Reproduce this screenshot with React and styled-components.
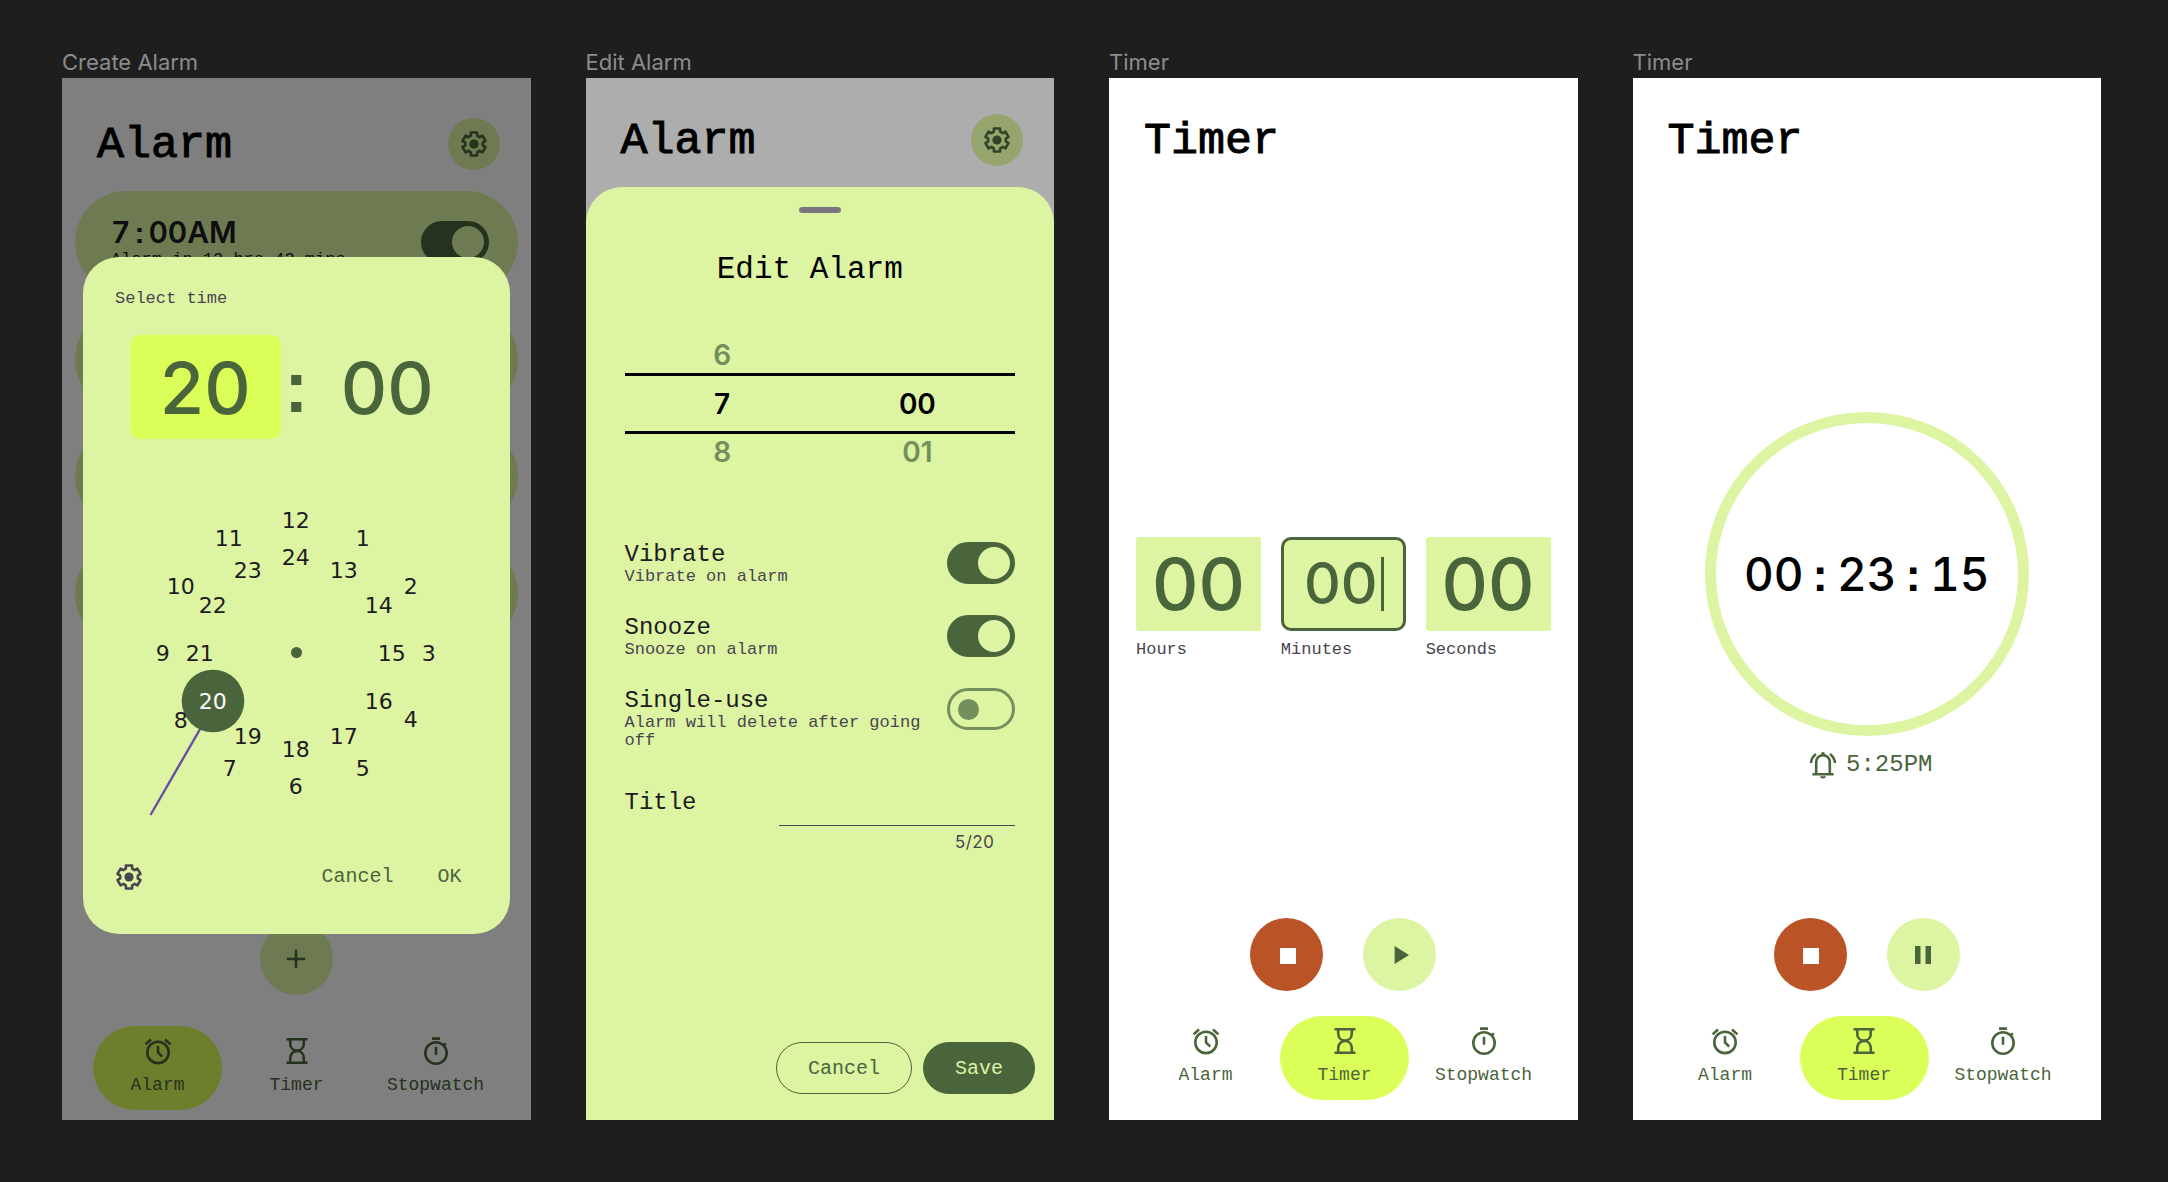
import React from 'react';
import styled, { createGlobalStyle, css } from 'styled-components';

const color = {
  canvas: '#1e1e1e',
  label: '#8c8c8c',
  surface: '#ffffff',
  lime: '#ddf4a3',
  bright: '#dbff58',
  green: '#4a643b',
  faded: '#748f5c',
  ink: '#1d1b20',
  muted: '#49454f',
  handle: '#79747e',
  hand: '#6750a4',
  stop: '#ba5325',
};

const mono = "'Liberation Mono', monospace";
const digits = "Inter, 'Liberation Sans', sans-serif";
const dialDigits = "'DejaVu Sans', sans-serif";
const squareDots = "'Liberation Sans', sans-serif";

const GlobalStyle = createGlobalStyle`
  *, *::before, *::after { box-sizing: border-box; }
  body { margin: 0; background: ${color.canvas}; font-family: ${mono}; }
  button, input { font: inherit; color: inherit; margin: 0; padding: 0; border: 0; background: none; }
  button { cursor: pointer; }
  h1, h2, h3, p, ul { margin: 0; padding: 0; font-weight: normal; list-style: none; }
`;

/* ---------- Canvas ---------- */

const Canvas = styled.main`
  min-height: 100vh;
  padding: 48px 67px 62px 62px;
  display: grid;
  grid-template-columns: repeat(auto-fit, minmax(420px, 1fr));
  gap: 55px;
`;

const Artboard = styled.section`
  display: flex;
  flex-direction: column;
`;

const ArtboardLabel = styled.h2`
  height: 30px;
  font-family: ${digits};
  font-size: 22px;
  line-height: 28px;
  color: ${color.label};
`;

const Screen = styled.div`
  position: relative;
  flex: 1;
  display: flex;
  flex-direction: column;
  overflow: hidden;
  background: ${color.surface};
`;

const Header = styled.header`
  display: flex;
  align-items: center;
  justify-content: space-between;
  height: 52px;
  margin: ${(p) => p.$top}px 31px 0 35px;
`;

const ScreenTitle = styled.h1`
  padding-top: 4px;
  font-size: 45px;
  line-height: 52px;
  color: #000;
  -webkit-text-stroke: 1px #000;
`;

const RoundButton = styled.button`
  && {
    width: ${(p) => p.$size}px;
    height: ${(p) => p.$size}px;
    border-radius: 50%;
    display: grid;
    place-items: center;
    flex: none;
    background: ${(p) => (p.$danger ? color.stop : color.lime)};
    color: ${(p) => (p.$danger ? '#fff' : color.green)};
  }
`;

const Body = styled.div`
  flex: 1;
  display: flex;
  flex-direction: column;
  justify-content: center;
  padding: ${(p) => p.$top}px 27px 0;
`;

const Controls = styled.div`
  display: flex;
  justify-content: center;
  gap: 40px;
  margin-top: auto;
`;

const Nav = styled.nav`
  display: grid;
  grid-template-columns: repeat(3, minmax(0, 129px));
  gap: 10px;
  padding-left: ${(p) => p.$inset}px;
  margin: ${(p) => (p.$low ? '31px 0 10px' : '25px 0 20px')};
`;

const NavItem = styled.a`
  display: flex;
  flex-direction: column;
  align-items: center;
  gap: 10px;
  padding: 11px 0 15px;
  border-radius: 42px;
  font-size: 18px;
  line-height: 20px;
  text-decoration: none;
  color: ${color.green};
  background: ${(p) => (p.$active ? color.bright : 'transparent')};
`;

const Scrim = styled.div`
  position: absolute;
  inset: 0;
  background: rgba(0, 0, 0, ${(p) => p.$strength});
`;

/* ---------- Icons ---------- */

const Svg = ({ children }) => (
  <svg width="28" height="28" viewBox="0 0 28 28" fill="none" stroke="currentColor" strokeWidth="2.6" aria-hidden="true">
    {children}
  </svg>
);

const polar = (r, deg) => {
  const a = ((deg - 90) * Math.PI) / 180;
  return `${(14 + r * Math.cos(a)).toFixed(2)} ${(14 + r * Math.sin(a)).toFixed(2)}`;
};

const gearPath =
  [0, 60, 120, 180, 240, 300]
    .map((t, i) => `${i ? 'L' : 'M'}${polar(8.9, t - 21)}L${polar(11.9, t - 15)}L${polar(11.9, t + 15)}L${polar(8.9, t + 21)}`)
    .join('') + 'Z';

const GearIcon = () => (
  <Svg>
    <path d={gearPath} strokeLinejoin="round" />
    <circle cx="14" cy="14" r="4.6" fill="currentColor" stroke="none" />
  </Svg>
);

const AlarmIcon = () => (
  <Svg>
    <circle cx="14" cy="15.4" r="10.7" />
    <path d="M1.6 7.4L7 2.5M26.4 7.4L21 2.5" />
    <path d="M14 9v6.4l4.2 4.2" />
  </Svg>
);

const HourglassIcon = () => (
  <Svg>
    <path d="M3.5 2.2h21M3.5 25.8h21" />
    <path d="M7.2 2.2v4.2c0 4 2.6 7.2 6.8 7.2s6.8-3.2 6.8-7.2V2.2M7.2 25.8v-4.6c0-4 2.6-7.2 6.8-7.2s6.8 3.2 6.8 7.2v4.6" />
  </Svg>
);

const StopwatchIcon = () => (
  <Svg>
    <circle cx="14" cy="16" r="10.7" />
    <path d="M10 1.6h8M14 9.8v8M21.5 8.3l2.4-1.8" />
  </Svg>
);

const BellIcon = () => (
  <Svg>
    <path d="M7.2 22.5V11a6.8 6.8 0 0 1 13.6 0v11.5M3.4 23.2h21.2" />
    <path d="M2 12c.2-3.600 1.600-6.400 5-9M26 12c-.2-3.600-1.600-6.400-5-9" />
    <path d="M11.200 25.300h5.600a2.800 2.200 0 0 1-5.600 0z" fill="currentColor" stroke="none" />
    <circle cx="14" cy="3" r="1.900" fill="currentColor" stroke="none" />
  </Svg>
);

const PlusIcon = () => (
  <Svg>
    <path d="M14 4.7v18.6M4.7 14h18.6" />
  </Svg>
);

const StopIcon = () => (
  <Svg>
    <path d="M7 7h16v16H7z" fill="currentColor" stroke="none" />
  </Svg>
);

const PlayIcon = () => (
  <Svg>
    <path d="M8.6 5v18L23 14z" fill="currentColor" stroke="none" />
  </Svg>
);

const PauseIcon = () => (
  <Svg>
    <path d="M6 5h5.5v18H6zM16.500 5H22v18h-5.500z" fill="currentColor" stroke="none" />
  </Svg>
);

/* ---------- Shared parts ---------- */

const BottomNav = ({ active, inset, low }) => (
  <Nav $inset={inset} $low={low} aria-label="Main">
    {[
      ['Alarm', AlarmIcon],
      ['Timer', HourglassIcon],
      ['Stopwatch', StopwatchIcon],
    ].map(([name, Icon]) => (
      <NavItem key={name} href={`#${name.toLowerCase()}`} $active={name === active}>
        <Icon />
        {name}
      </NavItem>
    ))}
  </Nav>
);

const Separator = styled.span`
  padding: 0 ${(p) => p.$gap}px;
  font-family: ${squareDots};
  font-weight: 700;
`;

const Switch = styled.input.attrs({ type: 'checkbox', role: 'switch' })`
  && {
    appearance: none;
    flex: none;
    width: 68px;
    height: 42px;
    border-radius: 21px;
    display: flex;
    align-items: center;
    padding: 0 8px;
    border: 3px solid ${color.faded};
    cursor: pointer;
  }
  &::before {
    content: '';
    width: 21px;
    height: 21px;
    border-radius: 50%;
    background: ${color.faded};
  }
  &&:checked {
    justify-content: flex-end;
    padding: 0 2px;
    border-color: ${color.green};
    background: ${color.green};
  }
  &:checked::before {
    width: 32px;
    height: 32px;
    background: ${color.lime};
  }
`;

/* ---------- Create alarm ---------- */

const AlarmList = styled.ul`
  display: flex;
  flex-direction: column;
  gap: 14px;
  margin: 21px 13px 0;
`;

const AlarmCard = styled.li`
  display: flex;
  justify-content: space-between;
  height: 103px;
  padding: 23px 29px 0 36px;
  border-radius: 52px;
  background: ${color.lime};
`;

const AlarmTime = styled.label`
  display: block;
  font-family: ${digits};
  font-size: 30px;
  font-weight: 600;
  line-height: 36px;
  font-variant-numeric: tabular-nums;
  color: ${color.ink};
`;

const AlarmNote = styled.p`
  font-size: 17px;
  line-height: 18px;
  color: ${color.ink};
`;

const SwitchSlot = styled.div`
  padding-top: 7px;
`;

const Overlay = styled.div`
  position: absolute;
  inset: 0;
  padding: 179px 21px 0;
`;

const Dialog = styled.section`
  display: flex;
  flex-direction: column;
  padding: 30px 32px 33px;
  border-radius: 36px;
  background: ${color.lime};
`;

const DialogTitle = styled.h3`
  font-size: 17px;
  line-height: 24px;
  color: ${color.muted};
`;

const TimeRow = styled.div`
  display: flex;
  justify-content: center;
  align-items: center;
  margin-top: 24px;
  font-family: ${digits};
  font-size: 72px;
  font-weight: 500;
  color: ${color.green};
`;

const TimePart = styled.button`
  && {
    width: 151px;
    height: 104px;
    border-radius: 10px;
    background: ${(p) => (p.$active ? color.bright : 'transparent')};
  }
`;

const Colon = styled.span`
  width: 31px;
  text-align: center;
  font-family: ${squareDots};
  font-weight: 700;
`;

const Dial = styled.div`
  position: relative;
  align-self: center;
  width: 333px;
  height: 333px;
  margin-top: 47px;
`;

const DialDrawing = styled.svg`
  display: block;
`;

const DialNumber = styled.button`
  && {
    position: absolute;
    width: 32px;
    height: 32px;
    font-family: ${dialDigits};
    font-size: 22px;
    line-height: 32px;
    color: ${(p) => (p.$selected ? '#fff' : color.ink)};
  }
`;

const DialogFooter = styled.footer`
  display: flex;
  align-items: center;
  height: 48px;
  margin-top: 34px;
  color: ${color.green};
`;

const IconButton = styled.button`
  && {
    display: grid;
    margin-right: auto;
    color: ${color.muted};
  }
`;

const TextButton = styled.button`
  && {
    margin-left: 12px;
    padding: 0 16px;
    font-size: 20px;
    line-height: 50px;
  }
`;

const CENTER = 166;
const onDial = (radius, hour) => {
  const a = (hour * Math.PI) / 6;
  return { x: Math.round(CENTER + radius * Math.sin(a)), y: Math.round(CENTER - radius * Math.cos(a)) };
};
const hours = [
  ...Array.from({ length: 12 }, (_, i) => ({ value: i + 1, ...onDial(133, i + 1) })),
  ...Array.from({ length: 12 }, (_, i) => ({ value: i + 13, ...onDial(96, i + 1) })),
];

const ClockDial = ({ selected }) => {
  const at = hours.find((h) => h.value === selected);
  return (
    <Dial>
      <DialDrawing width="333" height="333" viewBox="0 0 333 333" aria-hidden="true">
        <path d="M20.500 329L84 219" stroke={color.hand} strokeWidth="2.400" />
        <circle cx="166.500" cy="166.500" r="5.500" fill={color.green} />
        <circle cx={at.x} cy={at.y + 1} r="31.300" fill={color.green} />
      </DialDrawing>
      {hours.map((h) => (
        <DialNumber key={h.value} $selected={h.value === selected} style={{ left: h.x - 16, top: h.y - 14 }}>
          {h.value}
        </DialNumber>
      ))}
    </Dial>
  );
};

const CreateAlarm = () => (
  <Artboard>
    <ArtboardLabel>Create Alarm</ArtboardLabel>
    <Screen>
      <Header $top={40}>
        <ScreenTitle>Alarm</ScreenTitle>
        <RoundButton $size={52} aria-label="Settings">
          <GearIcon />
        </RoundButton>
      </Header>
      <AlarmList>
        <AlarmCard>
          <div>
            <AlarmTime htmlFor="alarm-7">
              7<Separator $gap={4}>:</Separator>00AM
            </AlarmTime>
            <AlarmNote>Alarm in 12 hrs 42 mins</AlarmNote>
          </div>
          <SwitchSlot>
            <Switch id="alarm-7" defaultChecked />
          </SwitchSlot>
        </AlarmCard>
        <AlarmCard />
        <AlarmCard />
        <AlarmCard />
      </AlarmList>
      <Controls>
        <RoundButton $size={73} aria-label="Add alarm">
          <PlusIcon />
        </RoundButton>
      </Controls>
      <BottomNav active="Alarm" inset={31} low />
      <Scrim $strength={0.5} />
      <Overlay>
        <Dialog role="dialog" aria-label="Select time">
          <DialogTitle>Select time</DialogTitle>
          <TimeRow>
            <TimePart $active>20</TimePart>
            <Colon>:</Colon>
            <TimePart>00</TimePart>
          </TimeRow>
          <ClockDial selected={20} />
          <DialogFooter>
            <IconButton aria-label="Settings">
              <GearIcon />
            </IconButton>
            <TextButton>Cancel</TextButton>
            <TextButton>OK</TextButton>
          </DialogFooter>
        </Dialog>
      </Overlay>
    </Screen>
  </Artboard>
);

/* ---------- Edit alarm ---------- */

const SheetLayer = styled.div`
  position: absolute;
  inset: 0;
  display: flex;
  padding-top: 109px;
`;

const Sheet = styled.form`
  flex: 1;
  display: flex;
  flex-direction: column;
  padding: 20px 39px 26px;
  border-radius: 36px 36px 0 0;
  background: ${color.lime};
`;

const Handle = styled.div`
  align-self: center;
  width: 42px;
  height: 6px;
  border-radius: 3px;
  background: ${color.handle};
`;

const SheetTitle = styled.h3`
  margin-top: 39px;
  padding-right: 20px;
  text-align: center;
  font-size: 31px;
  line-height: 36px;
  color: #000;
`;

const Picker = styled.div`
  margin-top: 49px;
  font-family: ${digits};
  font-size: 28px;
  font-weight: 600;
`;

const PickerRow = styled.div`
  display: grid;
  grid-template-columns: 1fr 1fr;
  align-items: center;
  height: 36px;
  color: ${color.faded};
  ${(p) =>
    p.$current &&
    css`
      height: 61px;
      border: solid #000;
      border-width: 3px 0;
      color: #000;
    `}
`;

const Settings = styled.div`
  display: flex;
  flex-direction: column;
  gap: 29px;
  margin-top: 72px;
`;

const SettingRow = styled.div`
  display: flex;
  justify-content: space-between;
  align-items: flex-start;
  gap: 12px;
`;

const SettingName = styled.label`
  display: block;
  font-size: 24px;
  line-height: 26px;
  color: ${color.ink};
`;

const SettingNote = styled.p`
  font-size: 17px;
  line-height: 18px;
  color: ${color.muted};
`;

const TitleField = styled.div`
  display: grid;
  grid-template-columns: 1fr 236px;
  margin-top: 40px;
`;

const TitleInput = styled.input`
  && {
    width: 100%;
    height: 36px;
    border-bottom: 1px solid ${color.muted};
    font-size: 20px;
    outline: none;
  }
`;

const Counter = styled.p`
  grid-column: 2;
  padding: 6px 21px 0 0;
  text-align: right;
  font-family: ${digits};
  font-size: 17px;
  line-height: 20px;
  font-variant-numeric: tabular-nums;
  color: ${color.muted};
`;

const SheetActions = styled.footer`
  display: flex;
  justify-content: flex-end;
  gap: 11px;
  margin: auto -20px 0 0;
`;

const PillButton = styled.button`
  && {
    height: 52px;
    padding: 0 31px;
    border: 1px solid ${color.green};
    border-radius: 26px;
    font-size: 20px;
    background: ${(p) => (p.$filled ? color.green : 'transparent')};
    color: ${(p) => (p.$filled ? color.lime : color.green)};
  }
`;

const EditAlarm = () => (
  <Artboard>
    <ArtboardLabel>Edit Alarm</ArtboardLabel>
    <Screen>
      <Header $top={36}>
        <ScreenTitle>Alarm</ScreenTitle>
        <RoundButton $size={52} aria-label="Settings">
          <GearIcon />
        </RoundButton>
      </Header>
      <Scrim $strength={0.32} />
      <SheetLayer>
        <Sheet onSubmit={(e) => e.preventDefault()}>
          <Handle />
          <SheetTitle>Edit Alarm</SheetTitle>
          <Picker>
            <PickerRow>
              <button type="button">6</button>
            </PickerRow>
            <PickerRow $current>
              <button type="button">7</button>
              <button type="button">00</button>
            </PickerRow>
            <PickerRow>
              <button type="button">8</button>
              <button type="button">01</button>
            </PickerRow>
          </Picker>
          <Settings>
            {[
              ['vibrate', 'Vibrate', 'Vibrate on alarm', true],
              ['snooze', 'Snooze', 'Snooze on alarm', true],
              ['single', 'Single-use', 'Alarm will delete after going off', false],
            ].map(([id, name, note, on]) => (
              <SettingRow key={id}>
                <div>
                  <SettingName htmlFor={id}>{name}</SettingName>
                  <SettingNote>{note}</SettingNote>
                </div>
                <Switch id={id} defaultChecked={on} />
              </SettingRow>
            ))}
          </Settings>
          <TitleField>
            <SettingName htmlFor="title">Title</SettingName>
            <TitleInput id="title" type="text" />
            <Counter>5/20</Counter>
          </TitleField>
          <SheetActions>
            <PillButton type="button">Cancel</PillButton>
            <PillButton type="submit" $filled>
              Save
            </PillButton>
          </SheetActions>
        </Sheet>
      </SheetLayer>
    </Screen>
  </Artboard>
);

/* ---------- Timer setup ---------- */

const Fields = styled.div`
  display: grid;
  grid-template-columns: repeat(3, minmax(0, 1fr));
  gap: 20px;
`;

const FieldBox = styled.div`
  display: flex;
  align-items: center;
  justify-content: center;
  gap: 2px;
  height: 94px;
  border-radius: ${(p) => (p.$focused ? 10 : 3)}px;
  border: ${(p) => (p.$focused ? `3px solid ${color.green}` : '0')};
  background: ${color.lime};
`;

const FieldInput = styled.input`
  && {
    width: ${(p) => (p.$focused ? 76 : 100)}px;
    height: 88px;
    text-align: center;
    font-family: ${digits};
    font-size: ${(p) => (p.$focused ? 57 : 72)}px;
    font-weight: 500;
    color: ${color.green};
    outline: none;
  }
`;

const Caret = styled.span`
  width: 3px;
  height: 54px;
  background: ${color.green};
`;

const FieldLabel = styled.label`
  display: block;
  margin-top: 9px;
  font-size: 17px;
  line-height: 20px;
  color: ${color.muted};
`;

const TimerSetup = () => (
  <Artboard>
    <ArtboardLabel>Timer</ArtboardLabel>
    <Screen>
      <Header $top={36}>
        <ScreenTitle>Timer</ScreenTitle>
      </Header>
      <Body $top={112}>
        <Fields>
          {['Hours', 'Minutes', 'Seconds'].map((name) => {
            const focused = name === 'Minutes';
            return (
              <div key={name}>
                <FieldBox $focused={focused}>
                  <FieldInput id={name} $focused={focused} defaultValue="00" inputMode="numeric" />
                  {focused && <Caret />}
                </FieldBox>
                <FieldLabel htmlFor={name}>{name}</FieldLabel>
              </div>
            );
          })}
        </Fields>
      </Body>
      <Controls>
        <RoundButton $size={73} $danger aria-label="Stop">
          <StopIcon />
        </RoundButton>
        <RoundButton $size={73} aria-label="Start">
          <PlayIcon />
        </RoundButton>
      </Controls>
      <BottomNav active="Timer" inset={32} />
    </Screen>
  </Artboard>
);

/* ---------- Timer running ---------- */

const Ring = styled.div`
  align-self: center;
  width: 324px;
  height: 324px;
  display: flex;
  align-items: center;
  justify-content: center;
  border: 11px solid ${color.lime};
  border-radius: 50%;
  font-family: ${digits};
  font-size: 46px;
  font-weight: 500;
  font-variant-numeric: tabular-nums;
  color: #000;
`;

const EndsAt = styled.p`
  display: flex;
  align-items: center;
  justify-content: center;
  gap: 9px;
  margin-top: 15px;
  padding-left: 8px;
  font-size: 24px;
  line-height: 28px;
  color: ${color.green};
`;

const TimerRunning = () => (
  <Artboard>
    <ArtboardLabel>Timer</ArtboardLabel>
    <Screen>
      <Header $top={36}>
        <ScreenTitle>Timer</ScreenTitle>
      </Header>
      <Body $top={107}>
        <Ring role="timer">
          <div>
            00<Separator $gap={9}>:</Separator>23<Separator $gap={9}>:</Separator>15
          </div>
        </Ring>
        <EndsAt>
          <BellIcon />
          5:25PM
        </EndsAt>
      </Body>
      <Controls>
        <RoundButton $size={73} $danger aria-label="Stop">
          <StopIcon />
        </RoundButton>
        <RoundButton $size={73} aria-label="Pause">
          <PauseIcon />
        </RoundButton>
      </Controls>
      <BottomNav active="Timer" inset={28} />
    </Screen>
  </Artboard>
);

export default function App() {
  return (
    <>
      <GlobalStyle />
      <Canvas>
        <CreateAlarm />
        <EditAlarm />
        <TimerSetup />
        <TimerRunning />
      </Canvas>
    </>
  );
}
